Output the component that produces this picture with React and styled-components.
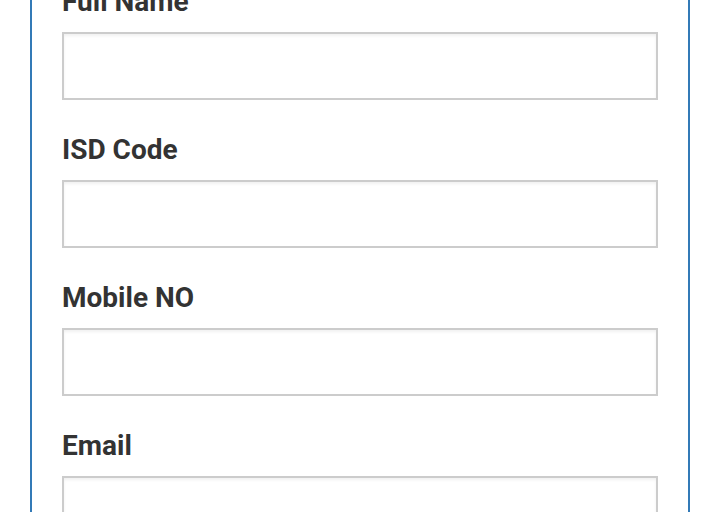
import React from "react";
import styled, { createGlobalStyle } from "styled-components";

const GlobalStyle = createGlobalStyle`
  body {
    margin: 0;
    background: #fff;
    font-family: Roboto, "Liberation Sans", sans-serif;
    overflow: hidden;
  }
`;

const FormCard = styled.form`
  margin: -50px 30px 0;
  padding: 30px;
  border: 2px solid #337ab7;
  background: #fff;
`;

const Field = styled.div`
  margin-bottom: 30px;
`;

const Label = styled.label`
  display: block;
  font-size: 28px;
  line-height: 40px;
  font-weight: 700;
  color: #333;
  margin-bottom: 10px;
`;

const Input = styled.input`
  display: block;
  box-sizing: border-box;
  width: 100%;
  height: 68px;
  border: 2px solid #ccc;
  box-shadow: inset 0 2px 3px rgba(0, 0, 0, 0.06);
  font-size: 24px;
  padding: 0 16px;
  outline: none;
`;

const fields = [
  { id: "fullname", label: "Full Name", type: "text" },
  { id: "isd", label: "ISD Code", type: "text" },
  { id: "mobile", label: "Mobile NO", type: "tel" },
  { id: "email", label: "Email", type: "email" },
];

export default function App() {
  return (
    <>
      <GlobalStyle />
      <FormCard onSubmit={(e) => e.preventDefault()}>
        {fields.map((f) => (
          <Field key={f.id}>
            <Label htmlFor={f.id}>{f.label}</Label>
            <Input id={f.id} name={f.id} type={f.type} />
          </Field>
        ))}
      </FormCard>
    </>
  );
}
